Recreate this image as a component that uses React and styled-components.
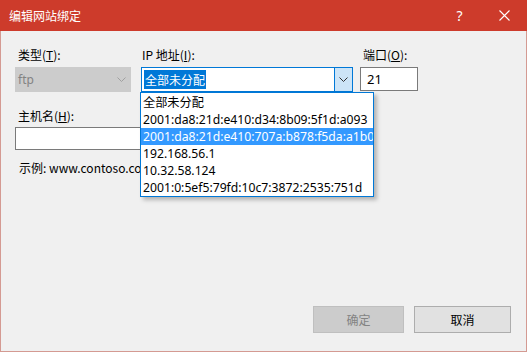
import React from "react";
import styled, { createGlobalStyle } from "styled-components";

const Global = createGlobalStyle`
    html, body {
        margin: 0;
        padding: 0;
        background: #f0f0f0;
    }
    body {
        font-family: "Noto Sans", "Noto Sans CJK SC", sans-serif;
        font-size: 12px;
        color: #000;
    }
`

const Window = styled.div`
    width: 527px;
    height: 352px;
    box-sizing: border-box;
    display: flex;
    flex-direction: column;
    background: #f0f0f0;
    border: 1px solid #d49a92;
    border-top: none;
`
const TitleBar = styled.div`
    height: 31px;
    margin: 0 -1px;
    display: flex;
    align-items: center;
    background: #cd3b2b;
    color: #fff;
    font-family: "Noto Sans CJK SC", sans-serif;
    font-size: 12px;
`
const Title = styled.div`
    flex: 1;
    padding-left: 9px;
`
const TitleButton = styled.div`
    width: 45px;
    height: 31px;
    display: flex;
    align-items: center;
    justify-content: center;
    font-size: 14px;
    font-family: "Noto Sans", sans-serif;
`
const Body = styled.div`
    flex: 1;
    position: relative;
    display: flex;
    flex-direction: column;
    padding: 16px 15px 0 14px;
`
const Row = styled.div`
    display: flex;
    gap: ${props => props.gap || 0}px;
`
const Field = styled.div`
    display: flex;
    flex-direction: column;
    width: ${props => props.width}px;
    margin-top: ${props => props.top || 0}px;
`
const Label = styled.div`
    height: 16px;
    line-height: 16px;
    padding-left: ${props => props.indent || 3}px;
    margin-bottom: ${props => props.gap || 4}px;
    font-family: "Noto Sans CJK SC", sans-serif;
    white-space: nowrap;
`
const Combo = styled.div`
    height: 25px;
    box-sizing: border-box;
    display: flex;
    align-items: center;
    border: 1px solid ${props => props.disabled ? '#cccccc' : '#0078d7'};
    background: ${props => props.disabled ? '#cccccc' : '#fff'};
    color: ${props => props.disabled ? '#838383' : '#000'};
`
const ComboText = styled.div`
    flex: 1;
    padding-left: 2px;
`
const Selected = styled.span`
    background: #0078d7;
    color: #fff;
    font-family: "Noto Sans CJK SC", sans-serif;
    padding: 1px 1px;
`
const Arrow = styled.div`
    width: 17px;
    align-self: stretch;
    display: flex;
    align-items: center;
    justify-content: center;
    background: ${props => props.active ? '#cce4f7' : 'transparent'};
    border-left: 1px solid ${props => props.active ? '#0078d7' : 'transparent'};
`
const TextBox = styled.div`
    height: ${props => props.height || 23}px;
    box-sizing: border-box;
    border: 1px solid #7a7a7a;
    background: #fff;
    padding-left: 6px;
    line-height: ${props => (props.height || 23) - 2}px;
    font-size: 13px;
`
const Example = styled.div`
    margin-top: 10px;
    padding-left: 4px;
    line-height: 16px;
    font-family: "Noto Sans CJK SC", sans-serif;
`
const DropList = styled.div`
    position: absolute;
    left: 139px;
    top: 61px;
    width: 234px;
    height: 105px;
    box-sizing: border-box;
    border: 1px solid #0078d7;
    background: #fff;
    padding-top: 1px;
    overflow: hidden;
    box-shadow: 3px 3px 4px rgba(0, 0, 0, 0.25);
`
const Item = styled.div`
    height: 17px;
    line-height: 17px;
    padding-left: 2px;
    white-space: nowrap;
    font-size: 12.2px;
    background: ${props => props.active ? '#3399ff' : 'transparent'};
    color: ${props => props.active ? '#fff' : '#000'};
`
const Footer = styled.div`
    margin-top: auto;
    display: flex;
    justify-content: flex-end;
    gap: 10px;
    padding: 0 0 18px 0;
`
const Button = styled.div`
    width: ${props => props.width}px;
    height: 27px;
    box-sizing: border-box;
    display: flex;
    align-items: center;
    justify-content: center;
    font-family: "Noto Sans CJK SC", sans-serif;
    border: 1px solid ${props => props.disabled ? '#bfbfbf' : '#adadad'};
    background: ${props => props.disabled ? '#cccccc' : '#e1e1e1'};
    color: ${props => props.disabled ? '#838383' : '#000'};
`

const Chevron = ({ color }) => (
    <svg width="9" height="5" viewBox="0 0 9 5">
        <path d="M0.5 0.5 L4.5 4.5 L8.5 0.5" fill="none" stroke={color} strokeWidth="1" />
    </svg>
)

const ips = [
    '全部未分配',
    '2001:da8:21d:e410:d34:8b09:5f1d:a093',
    '2001:da8:21d:e410:707a:b878:f5da:a1b0',
    '192.168.56.1',
    '10.32.58.124',
    '2001:0:5ef5:79fd:10c7:3872:2535:751d'
]

export default function App() {
    return (
        <React.Fragment>
            <Global />
            <Window>
                <TitleBar>
                    <Title>编辑网站绑定</Title>
                    <TitleButton>?</TitleButton>
                    <TitleButton>
                        <svg width="11" height="11" viewBox="0 0 11 11">
                            <path d="M0.5 0.5 L10.5 10.5 M10.5 0.5 L0.5 10.5" stroke="#fff" strokeWidth="1.1" />
                        </svg>
                    </TitleButton>
                </TitleBar>
                <Body>
                    <Row gap={10}>
                        <Field width={116}>
                            <Label>类型(<u>T</u>):</Label>
                            <Combo disabled>
                                <ComboText>ftp</ComboText>
                                <Arrow><Chevron color="#a0a0a0" /></Arrow>
                            </Combo>
                        </Field>
                        <Field width={212}>
                            <Label indent={1}>IP 地址(<u>I</u>):</Label>
                            <Combo>
                                <ComboText><Selected>全部未分配</Selected></ComboText>
                                <Arrow active><Chevron color="#333" /></Arrow>
                            </Combo>
                        </Field>
                        <Field width={58} style={{ marginLeft: -3 }}>
                            <Label indent={0}>端口(<u>O</u>):</Label>
                            <TextBox height={24}>21</TextBox>
                        </Field>
                    </Row>
                    <Field width={338} top={16}>
                        <Label gap={3}>主机名(<u>H</u>):</Label>
                        <TextBox />
                    </Field>
                    <Example>示例: www.contoso.co</Example>
                    <DropList>
                        {ips.map((ip, index) => (
                            <Item key={index} active={index === 2}>{ip}</Item>
                        ))}
                    </DropList>
                    <Footer>
                        <Button width={91} disabled>确定</Button>
                        <Button width={97}>取消</Button>
                    </Footer>
                </Body>
            </Window>
        </React.Fragment>
    )
}
